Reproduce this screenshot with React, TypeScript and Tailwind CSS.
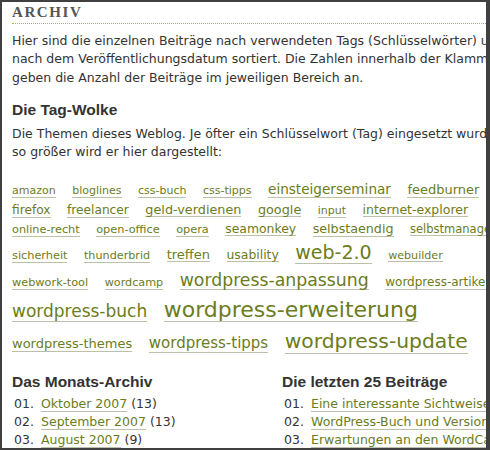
const verdana = "font-['DejaVu_Sans',Verdana,sans-serif]";
const arial = "font-['Liberation_Sans',Arial,sans-serif]";

type Tag = [string, string];

// each row: [height, tags], sizes are arbitrary Tailwind classes written out
const tagRows: { h: string; tags: Tag[] }[] = [
  {
    h: "h-[20.5px]",
    tags: [
      ["amazon", "text-[11px]"],
      ["bloglines", "text-[11px]"],
      ["css-buch", "text-[11px]"],
      ["css-tipps", "text-[11px]"],
      ["einsteigerseminar", "text-[13.6px]"],
      ["feedburner", "text-[13px]"],
    ],
  },
  {
    h: "h-[19.3px]",
    tags: [
      ["firefox", "text-[12.2px]"],
      ["freelancer", "text-[12.2px]"],
      ["geld-verdienen", "text-[12.8px]"],
      ["google", "text-[12.8px]"],
      ["input", "text-[11px]"],
      ["internet-explorer", "text-[12.5px]"],
    ],
  },
  {
    h: "h-[20.5px]",
    tags: [
      ["online-recht", "text-[11.3px]"],
      ["open-office", "text-[11.3px]"],
      ["opera", "text-[11.3px]"],
      ["seamonkey", "text-[12.4px]"],
      ["selbstaendig", "text-[12.7px]"],
      ["selbstmanagement", "text-[11.5px]"],
    ],
  },
  {
    h: "h-[28.5px]",
    tags: [
      ["sicherheit", "text-[11.3px]"],
      ["thunderbrid", "text-[11.2px]"],
      ["treffen", "text-[13px]"],
      ["usability", "text-[12.4px]"],
      ["web-2.0", "text-[19px]"],
      ["webuilder", "text-[11.1px]"],
    ],
  },
  {
    h: "h-[26.5px]",
    tags: [
      ["webwork-tool", "text-[11.3px]"],
      ["wordcamp", "text-[11.2px]"],
      ["wordpress-anpassung", "text-[17.3px]"],
      ["wordpress-artikel", "text-[12px]"],
    ],
  },
  {
    h: "h-[33.5px]",
    tags: [
      ["wordpress-buch", "text-[17px]"],
      ["wordpress-erweiterung", "text-[22px]"],
    ],
  },
  {
    h: "h-[24px]",
    tags: [
      ["wordpress-themes", "text-[13px]"],
      ["wordpress-tipps", "text-[15px]"],
      ["wordpress-update", "text-[20.3px]"],
    ],
  },
];

const months: [string, string][] = [
  ["Oktober 2007", "(13)"],
  ["September 2007", "(13)"],
  ["August 2007", "(9)"],
];

const posts = [
  "Eine interessante Sichtweise auf WordPress",
  "WordPress-Buch und Version 2.3",
  "Erwartungen an den WordCamp 2007",
];

const link = "text-[#6c7c21] border-b border-[#bcc0aa]";

function ListRow({ n, children }: { n: string; children: React.ReactNode }) {
  return (
    <div className="flex whitespace-nowrap">
      <span className="w-[29px] shrink-0 pl-[2px]">{n}</span>
      <span>{children}</span>
    </div>
  );
}

export default function App() {
  return (
    <div className="h-[450px] w-[490px] overflow-hidden border-y-2 border-l-2 border-r-4 border-[#404040] bg-white">
      <div className={`pl-[10px] text-[#333] ${verdana}`}>
        <h1 className="border-b border-dotted border-[#aab33a] pt-[2px] pb-[2px] font-['Liberation_Serif',Georgia,serif] text-[15px] leading-[17px] font-bold tracking-[1.6px] text-[#555]">
          ARCHIV
        </h1>

        <div className="mt-[8px] text-[12.5px] leading-[18.3px] whitespace-nowrap">
          <div>Hier sind die einzelnen Beiträge nach verwendeten Tags (Schlüsselwörter) und</div>
          <div>nach dem Veröffentlichungsdatum sortiert. Die Zahlen innerhalb der Klammern</div>
          <div>geben die Anzahl der Beiträge im jeweiligen Bereich an.</div>
        </div>

        <h2 className={`mt-[14px] text-[15.5px] leading-[18px] font-bold ${arial}`}>Die Tag-Wolke</h2>
        <div className="mt-[6px] text-[12.5px] leading-[18.3px] whitespace-nowrap">
          <div>Die Themen dieses Weblog. Je öfter ein Schlüsselwort (Tag) eingesetzt wurde, um</div>
          <div>so größer wird er hier dargestellt:</div>
        </div>

        <div className="mt-[21px]">
          {tagRows.map((row, i) => (
            <div key={i} className={`flex items-baseline gap-x-[16.5px] whitespace-nowrap ${row.h}`}>
              {row.tags.map(([t, size]) => (
                <span key={t} className={`${link} ${size} leading-[1.05]`}>
                  {t}
                </span>
              ))}
            </div>
          ))}
        </div>

        <div className="mt-[18px] grid grid-cols-[270px_1fr]">
          <div>
            <h2 className={`text-[15.5px] leading-[18px] font-bold ${arial}`}>Das Monats-Archiv</h2>
            <div className="mt-[3.5px] text-[12.5px] leading-[18.3px]">
              {months.map(([m, c], i) => (
                <ListRow key={m} n={`0${i + 1}.`}>
                  <span className={link}>{m}</span> {c}
                </ListRow>
              ))}
            </div>
          </div>
          <div>
            <h2 className={`text-[15.5px] leading-[18px] font-bold ${arial}`}>Die letzten 25 Beiträge</h2>
            <div className="mt-[3.5px] text-[12.5px] leading-[18.3px]">
              {posts.map((p, i) => (
                <ListRow key={p} n={`0${i + 1}.`}>
                  <span className={link}>{p}</span>
                </ListRow>
              ))}
            </div>
          </div>
        </div>
      </div>
    </div>
  );
}
